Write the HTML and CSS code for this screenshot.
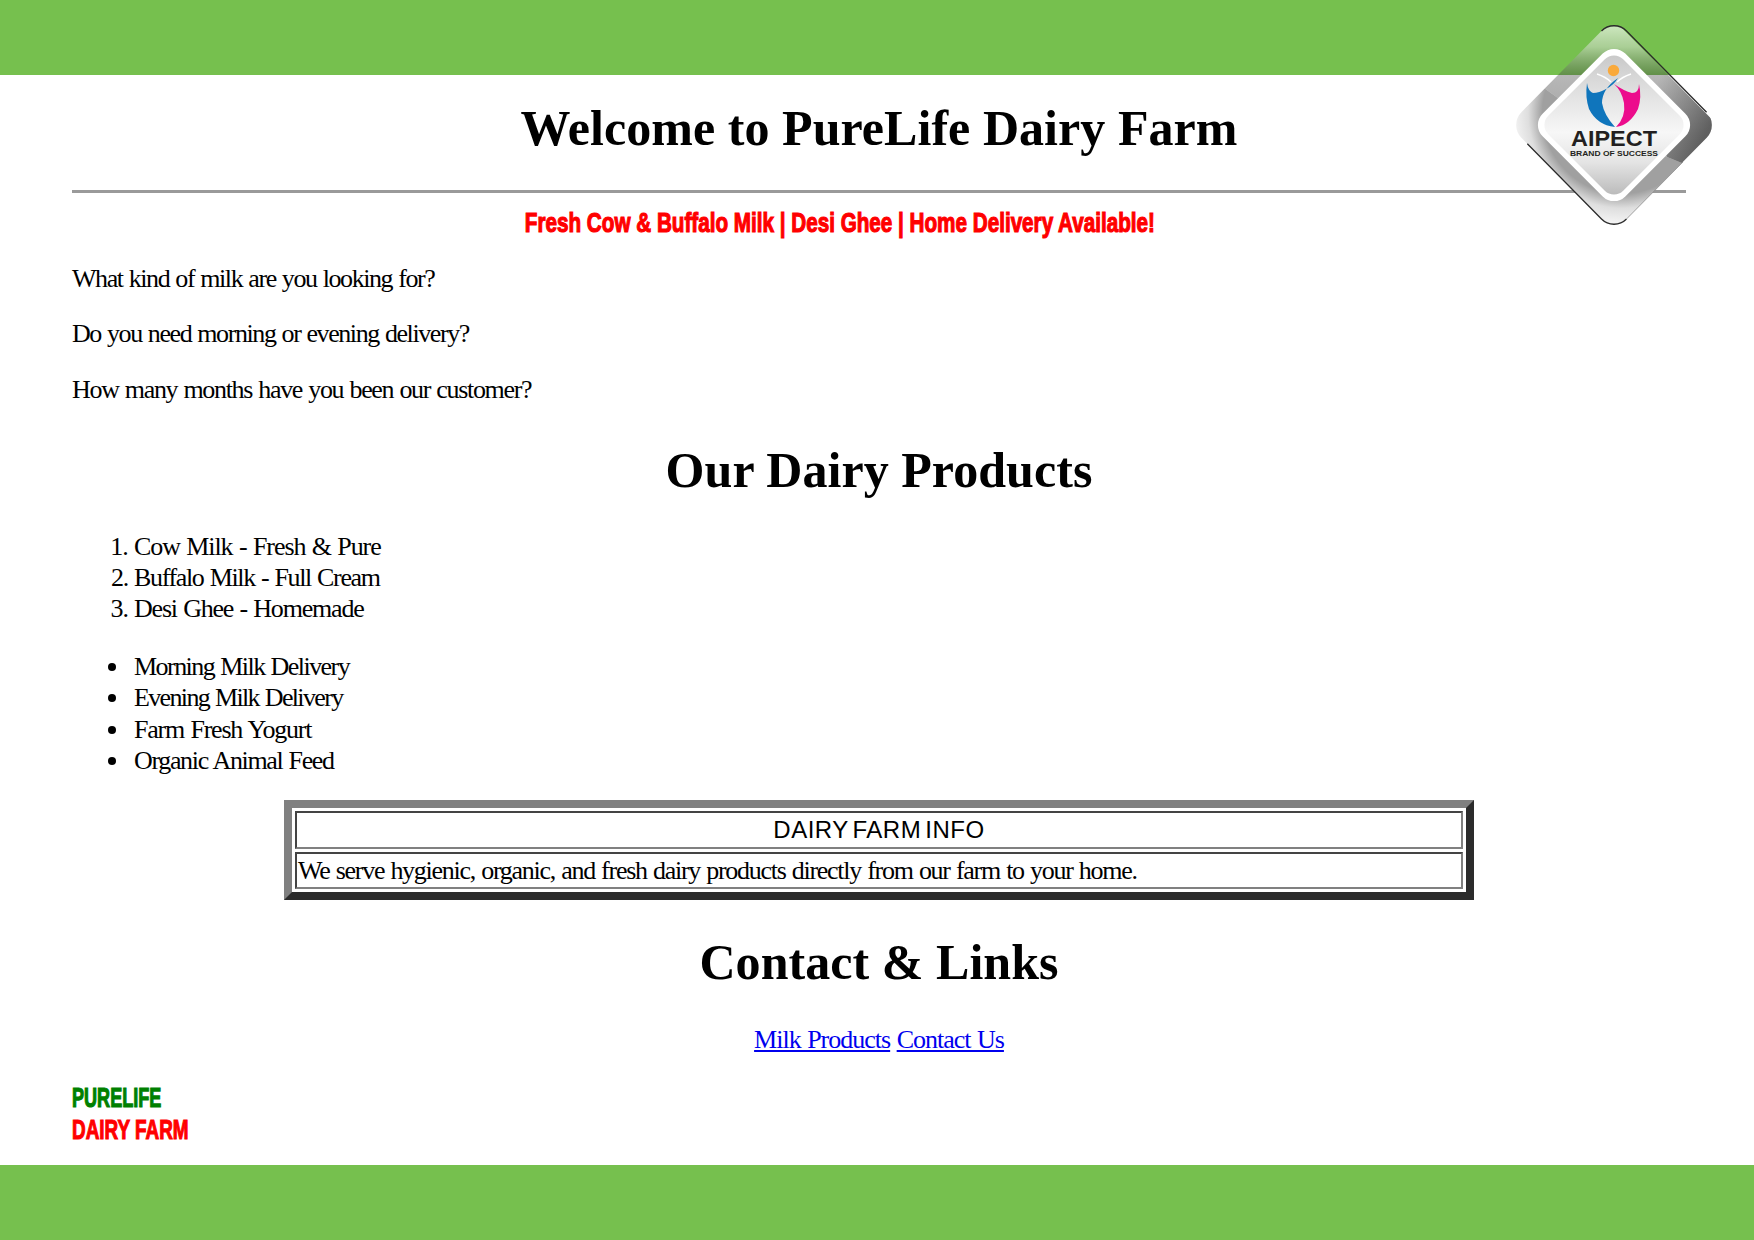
FILE: index.html
```html
<!DOCTYPE html>
<html lang="en">
<head>
<meta charset="utf-8">
<title>PureLife Dairy Farm</title>
<link rel="stylesheet" href="styles.css">
</head>
<body>
<div class="bar"></div>
<main class="page">
  <h1>Welcome to PureLife Dairy Farm</h1>
  <hr class="rule">
  <p class="tagline"><span>Fresh Cow &amp; Buffalo Milk | Desi Ghee | Home Delivery Available!</span></p>
  <p class="q">What kind of milk are you looking for?</p>
  <p class="q">Do you need morning or evening delivery?</p>
  <p class="q wide">How many months have you been our customer?</p>
  <h2>Our Dairy Products</h2>
  <ol class="list">
    <li class="wider">Cow Milk - Fresh &amp; Pure</li>
    <li>Buffalo Milk - Full Cream</li>
    <li class="loose">Desi Ghee - Homemade</li>
  </ol>
  <ul class="list bullets">
    <li class="snug">Morning Milk Delivery</li>
    <li class="tight">Evening Milk Delivery</li>
    <li class="loose">Farm Fresh Yogurt</li>
    <li>Organic Animal Feed</li>
  </ul>
  <table class="info">
    <tr><th>DAIRY FARM INFO</th></tr>
    <tr><td>We serve hygienic, organic, and fresh dairy products directly from our farm to your home.</td></tr>
  </table>
  <h2 class="contact">Contact &amp; Links</h2>
  <p class="links"><a href="#">Milk Products</a> <a href="#">Contact Us</a></p>
  <p class="brand"><span class="green">PURELIFE</span><span class="red">DAIRY FARM</span></p>
</main>
<div class="bar"></div>
<svg class="logo" viewBox="0 0 200 200" width="200" height="200" aria-label="AIPECT logo">
  <defs>
    <linearGradient id="shellTop" gradientUnits="userSpaceOnUse" x1="100" y1="0" x2="100" y2="110">
      <stop offset="0" stop-color="#fff" stop-opacity="0.65"/>
      <stop offset="0.2" stop-color="#ddd" stop-opacity="0.5"/>
      <stop offset="0.45" stop-color="#444" stop-opacity="0.38"/>
      <stop offset="1" stop-color="#555" stop-opacity="0.55"/>
    </linearGradient>
    <linearGradient id="shellRight" gradientUnits="userSpaceOnUse" x1="135" y1="75" x2="195" y2="105">
      <stop offset="0" stop-color="#444" stop-opacity="0"/>
      <stop offset="1" stop-color="#333" stop-opacity="0.6"/>
    </linearGradient>
    <radialGradient id="shellLow" gradientUnits="userSpaceOnUse" cx="108" cy="88" r="112">
      <stop offset="0.72" stop-color="#a0a0a0"/>
      <stop offset="0.85" stop-color="#dedede"/>
      <stop offset="1" stop-color="#f6f6f6"/>
    </radialGradient>
    <linearGradient id="face" x1="0" y1="0" x2="1" y2="1">
      <stop offset="0" stop-color="#c6c6c6"/>
      <stop offset="0.3" stop-color="#e2e2e2"/>
      <stop offset="0.55" stop-color="#f7f7f7"/>
      <stop offset="0.75" stop-color="#e4e4e4"/>
      <stop offset="1" stop-color="#b4b4b4"/>
    </linearGradient>
    <clipPath id="shellClip"><rect x="24.5" y="24.5" width="151" height="151" rx="18" transform="rotate(45 100 100)"/></clipPath>
  </defs>
  <g transform="translate(1.500 0) scale(0.985 1)">
    <g clip-path="url(#shellClip)">
      <path d="M0 50L29 63L43 73L154 132L169 138L205 150V205H0Z" fill="url(#shellLow)"/>
      <path d="M100 -5L205 100V150L169 138L154 132L43 73L29 63L0 50V-5Z" fill="url(#shellTop)"/>
      <path d="M100 -5L205 100V150L169 138L154 132L120 60Z" fill="url(#shellRight)"/>
    </g>
    <path d="M87.300 6A18 18 0 0 1 112.700 6L194 87.300" fill="none" stroke="#2b2b2b" stroke-width="1.300"/>
    <path d="M12 118.700L87.300 194A18 18 0 0 0 112.700 194" fill="none" stroke="#2b2b2b" stroke-width="1.300"/>
    <path d="M112.700 194L170 137" fill="none" stroke="#8a8a8a" stroke-width="0.800"/>
  </g>
  <rect x="41.5" y="41.5" width="117" height="117" rx="16" transform="rotate(45 100 100)" fill="#fff"/>
  <rect x="47" y="47" width="106" height="106" rx="13" transform="rotate(45 100 100)" fill="url(#face)"/>
  <circle cx="99.500" cy="45.500" r="5.700" fill="#f9a93b"/>
  <path d="M104 53Q100 60 92 64Q85 68 79 68Q74 66 73 58Q71 72 75 84Q83 100 101 102Q90 90 88 78Q88 64 104 53Z" fill="#0f75bc"/>
  <path d="M100 59Q110 66 118 68Q125 68 125 59Q128 72 124 84Q116 100 102 102Q112 92 110 78Q108 66 100 59Z" fill="#ec0c8c"/>
  <path d="M83 49Q92 52 97 57M117 49Q108 52 103 57" fill="none" stroke="#fff" stroke-width="1.500"/>
  <text class="logo-name" x="100" y="121" text-anchor="middle" textLength="86" lengthAdjust="spacingAndGlyphs">AIPECT</text>
  <text class="logo-sub" x="100" y="131" text-anchor="middle" textLength="88" lengthAdjust="spacingAndGlyphs">BRAND OF SUCCESS</text>
</svg>
</body>
</html>
```
FILE: styles.css
```css
* { box-sizing: border-box; }
html, body { margin: 0; padding: 0; background: #fff; }
body {
  width: 1754px;
  height: 1240px;
  overflow: hidden;
  display: flex;
  flex-direction: column;
  position: relative;
  font-family: "Liberation Serif", "Times New Roman", serif;
  font-size: 26px;
  color: #000;
  letter-spacing: -1.35px;
  word-spacing: 1px;
}
.bar { height: 75px; background: #76c04e; flex: none; }
.page { flex: 1; padding: 0 68px 0 72px; min-height: 0; }
h1, h2 {
  margin: 0;
  text-align: center;
  font-weight: bold;
  font-size: 50px;
  line-height: 55px;
  letter-spacing: 0.05px;
  word-spacing: 0;
}
h1 { padding-top: 26px; }
.rule {
  margin: 34px 0 0;
  height: 3px;
  border: 0;
  background: #9a9a9a;
}
.tagline {
  margin: 15px 0 0;
  padding-right: 79px;
  text-align: center;
  color: #f00;
  font-family: "Liberation Sans", Arial, sans-serif;
  font-weight: bold;
  font-size: 28px;
  line-height: 30px;
  letter-spacing: 0;
  word-spacing: 0;
}
.tagline span {
  display: inline-block;
  transform: scaleX(0.738);
  -webkit-text-stroke: 1.2px #f00;
}
.q { margin: 24.500px 0 0; line-height: 31px; letter-spacing: -1.42px; }
.q.wide { letter-spacing: -1.32px; }
h2 { margin-top: 38px; }
.list { margin: 33px 0 0; padding: 0 0 0 62px; }
.list li { line-height: 31.4px; }
.list + .list { margin-top: 26px; }
.bullets { list-style: none; }
.bullets li { position: relative; }
.bullets li::before {
  content: "";
  position: absolute;
  left: -26.500px;
  top: 12px;
  width: 8px;
  height: 8px;
  border-radius: 50%;
  background: #000;
}
.tight { letter-spacing: -1.65px; }
.snug { letter-spacing: -1.54px; }
.loose { letter-spacing: -1.2px; }
.wider { letter-spacing: -1.08px; }
.info {
  margin: 24px auto 0 212px;
  width: 1190px;
  border-collapse: separate;
  border-spacing: 3px;
  border-width: 8px;
  border-style: solid;
  border-color: #808080 #2b2b2b #2b2b2b #808080;
}
.info th, .info td {
  padding: 1px;
  border-width: 2px;
  border-style: solid;
  border-color: #444 #808080 #808080 #444;
  line-height: 31.5px;
}
.info td { letter-spacing: -1.275px; }
.info th {
  font-family: "Liberation Sans", Arial, sans-serif;
  font-size: 24px;
  font-weight: normal;
  text-align: center;
  letter-spacing: 0.5px;
  word-spacing: -3px;
}
.contact { margin-top: 35px; }
.links { margin: 34px 0 0; text-align: center; line-height: 31px; letter-spacing: -1px; }
.links a { color: #00e; text-decoration: underline; }
.brand {
  margin: 27px 0 0;
  font-family: "Liberation Sans", Arial, sans-serif;
  font-weight: bold;
  font-size: 28px;
  line-height: 31.4px;
  letter-spacing: 0;
  word-spacing: 0;
}
.green, .red { display: block; width: fit-content; transform-origin: left center; }
.green { color: #008000; -webkit-text-stroke: 1.2px #008000; transform: scaleX(0.645); }
.red { color: #f00; -webkit-text-stroke: 1.2px #f00; transform: scaleX(0.675); }
.logo { position: absolute; left: 1514px; top: 25px; }
.logo-name { font-family: "Liberation Sans", Arial, sans-serif; font-weight: bold; font-size: 22px; fill: #231f20; letter-spacing: 0; word-spacing: 0; }
.logo-sub { font-family: "Liberation Sans", Arial, sans-serif; font-weight: bold; font-size: 7.4px; fill: #231f20; letter-spacing: 0; word-spacing: 0; }
```
